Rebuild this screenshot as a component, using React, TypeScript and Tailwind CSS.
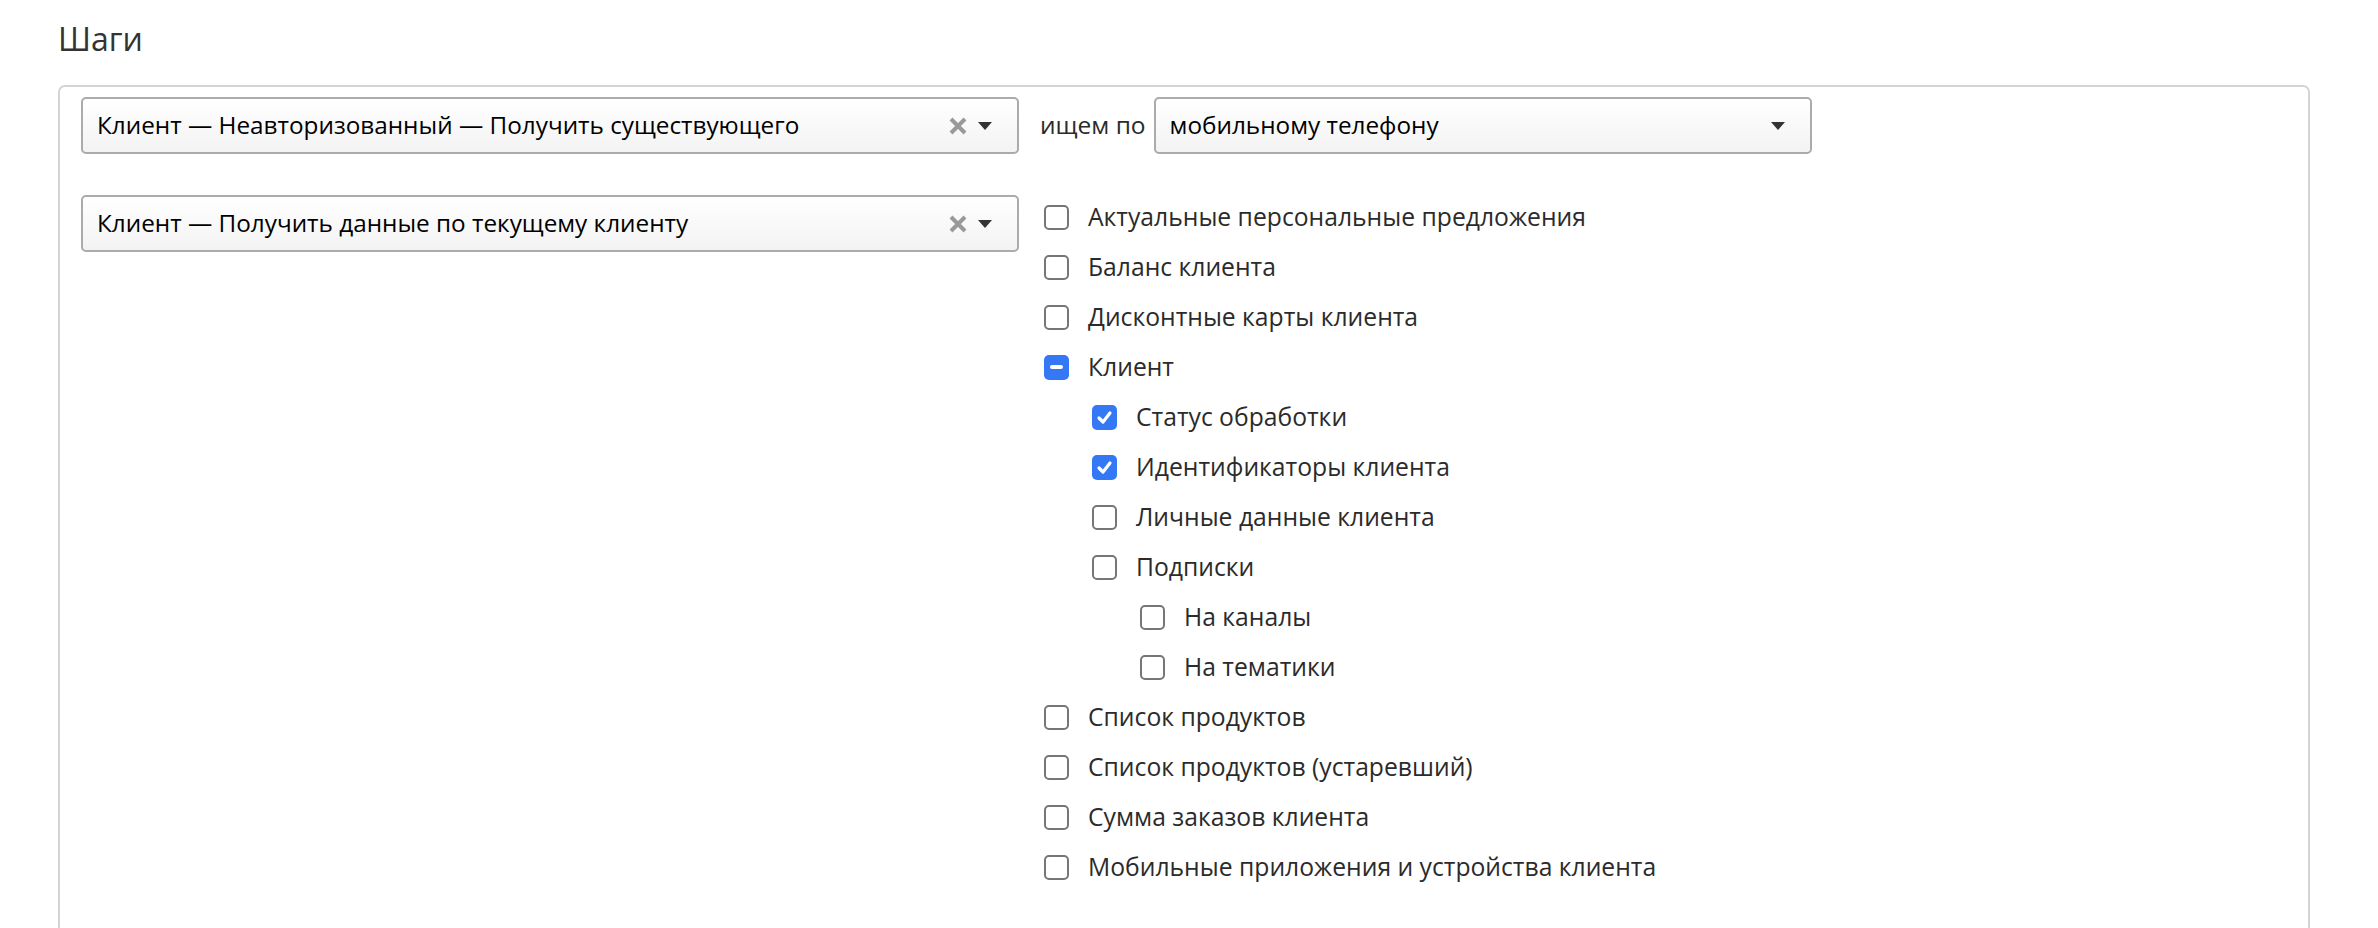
import React from "react";

const font = { fontFamily: '"Open Sans", "Noto Sans", sans-serif' };

function ClearIcon() {
  return (
    <svg width="20" height="20" viewBox="0 0 20 20" className="shrink-0">
      <path d="M3 3 L17 17 M17 3 L3 17" stroke="#999" strokeWidth="4" strokeLinecap="butt" />
    </svg>
  );
}

function Arrow() {
  return (
    <svg width="14" height="8" viewBox="0 0 14 8" className="shrink-0">
      <path d="M0 0 L14 0 L7 8 Z" fill="#333" />
    </svg>
  );
}

function Select({ text, width, clear }: { text: string; width: string; clear?: boolean }) {
  return (
    <div
      className={`${width} h-[57px] shrink-0 flex items-center pl-[14px] pr-[25px] border-2 border-[#ababab] rounded-[5px] bg-gradient-to-b from-white to-[#f3f3f3]`}
    >
      <span className="flex-1 text-[24.3px] text-black whitespace-nowrap leading-none" style={font}>
        {text}
      </span>
      {clear && (
        <span className="mr-[10px] flex items-center">
          <ClearIcon />
        </span>
      )}
      <Arrow />
    </div>
  );
}

type State = "off" | "on" | "mixed";

function Box({ state }: { state: State }) {
  if (state === "off") {
    return <span className="w-[25px] h-[25px] shrink-0 rounded-[5px] border-2 border-[#767676] bg-white" />;
  }
  return (
    <span className="w-[25px] h-[25px] shrink-0 rounded-[5px] bg-[#3478f6] flex items-center justify-center">
      {state === "on" ? (
        <svg width="17" height="17" viewBox="0 0 17 17">
          <path d="M3 9 L7 13 L14 4" stroke="white" strokeWidth="3.2" fill="none" strokeLinecap="round" strokeLinejoin="round" />
        </svg>
      ) : (
        <span className="w-[13px] h-[4px] rounded-[2px] bg-white" />
      )}
    </span>
  );
}

const items: { label: string; level: number; state: State }[] = [
  { label: "Актуальные персональные предложения", level: 0, state: "off" },
  { label: "Баланс клиента", level: 0, state: "off" },
  { label: "Дисконтные карты клиента", level: 0, state: "off" },
  { label: "Клиент", level: 0, state: "mixed" },
  { label: "Статус обработки", level: 1, state: "on" },
  { label: "Идентификаторы клиента", level: 1, state: "on" },
  { label: "Личные данные клиента", level: 1, state: "off" },
  { label: "Подписки", level: 1, state: "off" },
  { label: "На каналы", level: 2, state: "off" },
  { label: "На тематики", level: 2, state: "off" },
  { label: "Список продуктов", level: 0, state: "off" },
  { label: "Список продуктов (устаревший)", level: 0, state: "off" },
  { label: "Сумма заказов клиента", level: 0, state: "off" },
  { label: "Мобильные приложения и устройства клиента", level: 0, state: "off" },
];

const indent = ["pl-0", "pl-[48px]", "pl-[96px]"];

export default function App() {
  return (
    <div className="w-[2378px] h-[928px] bg-white overflow-hidden" style={font}>
      <div className="pl-[58px] pt-[19px] h-[85px]">
        <h2 className="text-[32px] leading-[40px] text-[#333] font-normal">Шаги</h2>
      </div>
      <div className="ml-[58px] mr-[68px] h-[900px] border-2 border-[#d4d4d4] rounded-[7px] pl-[21px] pt-[10px]">
        <div className="flex items-center">
          <Select text="Клиент — Неавторизованный — Получить существующего" width="w-[938px]" clear />
          <span className="ml-[21px] mr-[8px] text-[24.5px] text-[#2b2b2b] whitespace-nowrap">ищем по</span>
          <Select text="мобильному телефону" width="w-[658px]" />
        </div>
        <div className="flex items-start mt-[41px]">
          <Select text="Клиент — Получить данные по текущему клиенту" width="w-[938px]" clear />
          <div className="ml-[25px] -mt-[3px] flex flex-col">
            {items.map((it, i) => (
              <div key={i} className={`h-[50px] flex items-center gap-[19px] ${indent[it.level]}`}>
                <Box state={it.state} />
                <span className="text-[24.7px] text-[#2b2b2b] whitespace-nowrap">{it.label}</span>
              </div>
            ))}
          </div>
        </div>
      </div>
    </div>
  );
}
